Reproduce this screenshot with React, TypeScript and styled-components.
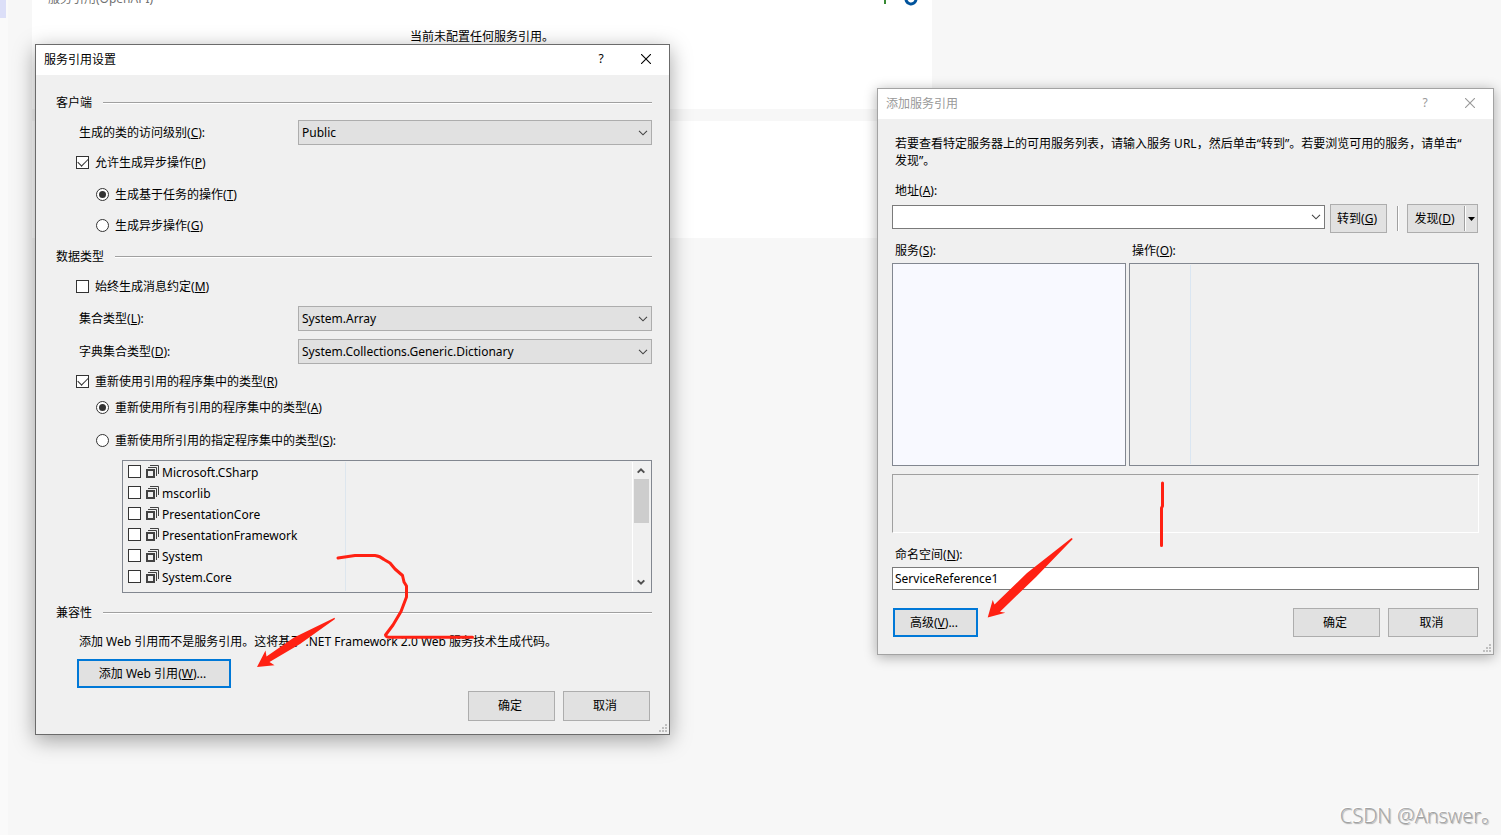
import React from "react";
import styled, { createGlobalStyle, css } from "styled-components";

const GlobalStyle = createGlobalStyle`
  * { box-sizing: border-box; }
  html, body { margin: 0; height: 100%; }
  body {
    background: #f7f7f7;
    color: #000;
    font: 12px/20px "Noto Sans", "Noto Sans CJK SC", sans-serif;
    overflow: hidden;
  }
  button, input, select { font: inherit; color: inherit; margin: 0; }
`;

const Desktop = styled.main`
  position: relative;
  display: flex;
  gap: 24px;
  min-height: 100vh;
  overflow: hidden;
`;

const Rail = styled.aside`
  width: 8px;
  background: #fafafa;
`;

const RailMark = styled.div`
  width: 6px;
  height: 18px;
  background: #dcdff8;
`;

const Cards = styled.div`
  flex: 0 1 900px;
  display: flex;
  flex-direction: column;
  gap: 12px;
`;

const Card = styled.section<{ $height: number }>`
  height: ${(p) => p.$height}px;
  background: #fff;
`;

const CardHead = styled.header`
  display: flex;
  justify-content: space-between;
  align-items: center;
  height: 20px;
  margin-top: -11px;
  padding: 0 14px 0 16px;
  color: #717171;
`;

const CardIcons = styled.span`
  display: flex;
  gap: 12px;
`;

const EmptyNote = styled.p`
  margin: 18px 0 0;
  text-align: center;
`;

const Dialog = styled.section<{ $inactive?: boolean; $x: number; $y: number; $width: number }>`
  position: absolute;
  left: ${(p) => p.$x}px;
  top: ${(p) => p.$y}px;
  width: ${(p) => p.$width}px;
  background: #f0f0f0;
  border: 1px solid ${(p) => (p.$inactive ? "#a3a3a3" : "#6b6b6b")};
  box-shadow: ${(p) =>
    p.$inactive ? "0 2px 12px rgba(0,0,0,.32)" : "0 5px 20px rgba(0,0,0,.36)"};
`;

const TitleBar = styled.header<{ $inactive?: boolean }>`
  display: flex;
  align-items: center;
  height: 30px;
  padding-left: 8px;
  background: #fff;
  color: ${(p) => (p.$inactive ? "#999" : "#000")};
`;

const Title = styled.h1`
  flex: 1;
  margin: 0;
  font-size: 12px;
  font-weight: 400;
`;

const TitleButton = styled.button`
  display: flex;
  align-items: center;
  justify-content: center;
  width: 45px;
  height: 30px;
  padding: 0 1px 2px 0;
  border: 0;
  background: none;
`;

const SettingsBody = styled.form`
  display: flex;
  flex-direction: column;
  padding: 18px 17px 13px 20px;
`;

const ServiceBody = styled.form`
  display: flex;
  flex-direction: column;
  padding: 16px 14px 17px;
`;

const GroupTitle = styled.h2<{ $gap?: number }>`
  display: flex;
  align-items: center;
  gap: 11px;
  height: 20px;
  margin: ${(p) => p.$gap ?? 0}px 0 0;
  font-size: 12px;
  font-weight: 400;
  line-height: 22px;
  &::after {
    content: "";
    flex: 1;
    height: 2px;
    background: linear-gradient(#a0a0a0 50%, #fff 50%);
  }
`;

const Caption = styled.span`
  padding-top: 2px;
`;

const Field = styled.div<{ $gap: number }>`
  display: grid;
  grid-template-columns: 219px 1fr;
  align-items: center;
  margin-top: ${(p) => p.$gap}px;
  padding-left: 23px;
`;

const SelectBox = styled.div`
  position: relative;
  display: grid;
`;

const Select = styled.select`
  appearance: none;
  width: 100%;
  height: 25px;
  padding: 0 20px 0 3px;
  border: 1px solid #adadad;
  border-radius: 0;
  background: #e1e1e1;
`;

const SelectArrow = styled.span`
  position: absolute;
  right: 4px;
  top: 0;
  height: 100%;
  display: flex;
  align-items: center;
  pointer-events: none;
`;

const Choice = styled.label<{ $gap: number; $nested?: boolean }>`
  display: flex;
  align-items: center;
  gap: 6px;
  height: 20px;
  margin-top: ${(p) => p.$gap}px;
  padding-left: ${(p) => (p.$nested ? 40 : 20)}px;
`;

const mark = css`
  appearance: none;
  flex: none;
  display: grid;
  place-items: center;
  width: 13px;
  height: 13px;
  border: 1px solid #333;
  background: #fff;
`;

const Check = styled.input.attrs({ type: "checkbox" })`
  ${mark}
  &:checked::after {
    content: "";
    width: 9px;
    height: 5px;
    margin-top: -3px;
    border: solid #333;
    border-width: 0 0 1px 1px;
    transform: rotate(-45deg);
  }
`;

const Radio = styled.input.attrs({ type: "radio" })`
  ${mark}
  border-radius: 50%;
  &:checked::after {
    content: "";
    width: 7px;
    height: 7px;
    border-radius: 50%;
    background: #333;
  }
`;

const AssemblyBox = styled.div`
  display: flex;
  height: 133px;
  margin: 10px 0 0 66px;
  padding: 1px 2px 1px 5px;
  border: 1px solid #828790;
`;

const AssemblyList = styled.ul`
  width: 218px;
  margin: 0;
  padding: 0;
  list-style: none;
  border-right: 1px solid #dde6ee;
`;

const AssemblyItem = styled.li`
  height: 21px;
`;

const AssemblyLabel = styled.label`
  display: flex;
  align-items: center;
  gap: 3px;
  height: 19px;
  svg { margin-left: 2px; }
`;

const ScrollBar = styled.div`
  display: flex;
  flex-direction: column;
  align-items: center;
  width: 17px;
  margin-left: auto;
  border-left: 1px solid #fff;
`;

const ScrollButton = styled.button`
  display: grid;
  place-items: center;
  width: 15px;
  height: 17px;
  padding: 0;
  border: 0;
  background: none;
`;

const ScrollThumb = styled.div`
  width: 15px;
  height: 44px;
  margin-bottom: auto;
  background: #cdcdcd;
`;

const Note = styled.p`
  margin: 9px 0 7px;
  padding-left: 23px;
  white-space: nowrap;
`;

const Actions = styled.div<{ $gap: number; $inset: number }>`
  display: flex;
  justify-content: flex-end;
  gap: 8px;
  margin-top: ${(p) => p.$gap}px;
  padding: 0 ${(p) => p.$inset}px;
`;

const Button = styled.button<{ $width?: number; $tall?: boolean; $focused?: boolean }>`
  flex: none;
  width: ${(p) => p.$width ?? 87}px;
  height: ${(p) => (p.$tall ? 30 : 29)}px;
  padding: 0 3px 0 0;
  border: ${(p) => (p.$focused ? "2px solid #0078d7" : "1px solid #adadad")};
  background: #e1e1e1;
`;

const WebButton = styled(Button)`
  margin-left: 21px;
`;

const AdvancedButton = styled(Button)`
  margin-right: auto;
`;

const Intro = styled.p`
  margin: 0;
  padding-left: 3px;
  line-height: 17px;
  white-space: nowrap;
`;

const Label = styled.label<{ $gap?: number }>`
  display: block;
  height: 20px;
  margin-top: ${(p) => p.$gap ?? 0}px;
  padding-left: 3px;
`;

const AddressRow = styled.div`
  display: flex;
  align-items: center;
  gap: 5px;
  margin-top: 3px;
  padding-right: 1px;
`;

const Combo = styled.div`
  flex: 1;
  display: flex;
  height: 24px;
  margin-bottom: 3px;
  border: 1px solid #7a7a7a;
  background: #fff;
`;

const ComboInput = styled.input`
  flex: 1;
  min-width: 0;
  padding: 0 2px;
  border: 0;
  background: none;
`;

const ComboButton = styled.button`
  display: grid;
  place-items: center;
  width: 17px;
  padding: 0;
  border: 0;
  background: none;
`;

const Divider = styled.span`
  width: 2px;
  height: 25px;
  margin: 0 3px 0 5px;
  background: linear-gradient(90deg, #a0a0a0 50%, #fff 50%);
`;

const SplitButton = styled.div`
  display: flex;
  align-items: center;
  width: 71px;
  height: 29px;
  border: 1px solid #adadad;
  background: #e1e1e1;
`;

const SplitMain = styled.button`
  flex: 1;
  padding: 0 3px 0 0;
  border: 0;
  background: none;
`;

const SplitDrop = styled.button`
  display: grid;
  place-items: center;
  width: 13px;
  height: 25px;
  padding: 0;
  border: 0;
  border-left: 1px solid #a0a0a0;
  background: none;
  box-shadow: inset 1px 0 #fff;
`;

const Panes = styled.div`
  display: grid;
  grid-template-columns: 234px 1fr;
  gap: 3px;
  margin-top: 8px;
`;

const PaneTitle = styled.h2`
  height: 22px;
  margin: 0;
  padding-left: 3px;
  font-size: 12px;
  font-weight: 400;
`;

const Pane = styled.div<{ $tree?: boolean }>`
  height: 203px;
  padding: 1px;
  border: 1px solid #828790;
  background: ${(p) => (p.$tree ? "#f8f9ff" : "#f0f0f0")};
`;

const PaneColumn = styled.div`
  width: 60px;
  height: 100%;
  border-right: 1px solid #dae6f2;
`;

const Status = styled.div`
  height: 59px;
  margin-top: 8px;
  border: 1px solid;
  border-color: #a0a0a0 #fff #fff #a0a0a0;
`;

const TextBox = styled.input`
  height: 23px;
  margin-top: 2px;
  padding: 0 2px;
  border: 1px solid #7a7a7a;
  background: #fff;
`;

const Grip = styled.svg`
  position: absolute;
  right: 2px;
  bottom: 2px;
`;

const Ink = styled.svg`
  position: absolute;
  left: -1px;
  top: -1px;
  pointer-events: none;
  overflow: visible;
`;

const Watermark = styled.div`
  position: absolute;
  right: 0;
  bottom: 6px;
  font: 300 20px/26px "Open Sans", "Noto Sans CJK SC", sans-serif;
  color: #a2a2a2;
  text-shadow: -1px -1px #fff, 1px 1px 1px #aaa;
`;

const Chevron = () => (
  <svg width="10" height="6" viewBox="0 0 10 6" fill="none" stroke="#444" strokeWidth="1.1" aria-hidden="true">
    <path d="M1 .8 5 4.8 9 .8" />
  </svg>
);

const CloseIcon = () => (
  <svg width="10" height="10" viewBox="0 0 10 10" fill="none" stroke="currentColor" strokeWidth="1.1" aria-hidden="true">
    <path d="M0 0l10 10M10 0L0 10" />
  </svg>
);

const ScrollArrow = ({ down }: { down?: boolean }) => (
  <svg width="8" height="7" viewBox="0 0 8 7" fill="none" stroke="#505050" strokeWidth="2" aria-hidden="true">
    <path d={down ? "M.7 1.4 4 4.7 7.3 1.4" : "M.7 5.6 4 2.3 7.3 5.6"} />
  </svg>
);

const AssemblyIcon = () => (
  <svg width="13" height="13" viewBox="0 0 13 13" fill="none" stroke="#424242" aria-hidden="true">
    <path d="M1 5h7v7H1z" strokeWidth="2" />
    <path d="M2 2.5h8.5V11M4 .5h8.5V9" />
  </svg>
);

const ResizeGrip = () => (
  <Grip width="8" height="8" viewBox="0 0 8 8" fill="#bfbfbf" aria-hidden="true">
    <path d="M6 0h2v2H6zM3 3h2v2H3zM6 3h2v2H6zM0 6h2v2H0zM3 6h2v2H3zM6 6h2v2H6z" />
  </Grip>
);

const Key = ({ k }: { k: string }) => (
  <>
    (<u>{k}</u>)
  </>
);

const assemblies = [
  "Microsoft.CSharp",
  "mscorlib",
  "PresentationCore",
  "PresentationFramework",
  "System",
  "System.Core",
];

function SelectField({ id, label, k, value, gap }: { id: string; label: string; k: string; value: string; gap: number }) {
  return (
    <Field $gap={gap}>
      <label htmlFor={id}>
        {label}
        <Key k={k} />:
      </label>
      <SelectBox>
        <Select id={id} defaultValue={value}>
          <option>{value}</option>
        </Select>
        <SelectArrow>
          <Chevron />
        </SelectArrow>
      </SelectBox>
    </Field>
  );
}

function DialogTitle({ text, inactive }: { text: string; inactive?: boolean }) {
  return (
    <TitleBar $inactive={inactive}>
      <Title>{text}</Title>
      <TitleButton type="button" aria-label="帮助">?</TitleButton>
      <TitleButton type="button" aria-label="关闭">
        <CloseIcon />
      </TitleButton>
    </TitleBar>
  );
}

function SettingsDialog() {
  return (
    <Dialog $x={35} $y={44} $width={635}>
      <DialogTitle text="服务引用设置" />
      <SettingsBody>
        <GroupTitle>客户端</GroupTitle>
        <SelectField id="access" label="生成的类的访问级别" k="C" value="Public" gap={7} />
        <Choice $gap={7}>
          <Check defaultChecked />
          <Caption>允许生成异步操作<Key k="P" /></Caption>
        </Choice>
        <Choice $gap={12} $nested>
          <Radio name="async" defaultChecked />
          <Caption>生成基于任务的操作<Key k="T" /></Caption>
        </Choice>
        <Choice $gap={11} $nested>
          <Radio name="async" />
          <Caption>生成异步操作<Key k="G" /></Caption>
        </Choice>
        <GroupTitle $gap={12}>数据类型</GroupTitle>
        <Choice $gap={9}>
          <Check />
          <Caption>始终生成消息约定<Key k="M" /></Caption>
        </Choice>
        <SelectField id="collection" label="集合类型" k="L" value="System.Array" gap={10} />
        <SelectField id="dictionary" label="字典集合类型" k="D" value="System.Collections.Generic.Dictionary" gap={8} />
        <Choice $gap={7}>
          <Check defaultChecked />
          <Caption>重新使用引用的程序集中的类型<Key k="R" /></Caption>
        </Choice>
        <Choice $gap={6} $nested>
          <Radio name="reuse" defaultChecked />
          <Caption>重新使用所有引用的程序集中的类型<Key k="A" /></Caption>
        </Choice>
        <Choice $gap={13} $nested>
          <Radio name="reuse" />
          <Caption>重新使用所引用的指定程序集中的类型<Key k="S" />:</Caption>
        </Choice>
        <AssemblyBox>
          <AssemblyList>
            {assemblies.map((name) => (
              <AssemblyItem key={name}>
                <AssemblyLabel>
                  <Check />
                  <AssemblyIcon />
                  <Caption>{name}</Caption>
                </AssemblyLabel>
              </AssemblyItem>
            ))}
          </AssemblyList>
          <ScrollBar>
            <ScrollButton type="button" aria-label="向上滚动">
              <ScrollArrow />
            </ScrollButton>
            <ScrollThumb />
            <ScrollButton type="button" aria-label="向下滚动">
              <ScrollArrow down />
            </ScrollButton>
          </ScrollBar>
        </AssemblyBox>
        <GroupTitle $gap={10}>兼容性</GroupTitle>
        <Note>添加 Web 引用而不是服务引用。这将基于 .NET Framework 2.0 Web 服务技术生成代码。</Note>
        <WebButton type="button" $width={154} $focused>
          添加 Web 引用<Key k="W" />...
        </WebButton>
        <Actions $gap={3} $inset={2}>
          <Button type="button" $tall>确定</Button>
          <Button type="button" $tall>取消</Button>
        </Actions>
      </SettingsBody>
      <ResizeGrip />
      <Ink width="635" height="691" viewBox="35 44 635 691" aria-hidden="true">
        <path
          d="M338 558 355 555.5H375Q380 556 384 559.5L390 563 395 569 402.5 575.5 404 582 406.5 586V597L401 611.5 393 625 385.5 635Q386 637.3 389 637.3H472.5"
          fill="none"
          stroke="#ff2113"
          strokeWidth="3"
          strokeLinecap="round"
          strokeLinejoin="round"
        />
        <path d="M257 667 265.5 650.5 266.5 656.5 294 637.5 334.5 617.8 335 619 300 644 269.5 662 274.5 665.3Z" fill="#ff2113" />
      </Ink>
    </Dialog>
  );
}

function ServiceDialog() {
  return (
    <Dialog $inactive $x={877} $y={88} $width={617}>
      <DialogTitle text="添加服务引用" inactive />
      <ServiceBody>
        <Intro>
          若要查看特定服务器上的可用服务列表，请输入服务 URL，然后单击“转到”。若要浏览可用的服务，请单击“
          <br />
          发现”。
        </Intro>
        <Label htmlFor="address" $gap={12}>地址<Key k="A" />:</Label>
        <AddressRow>
          <Combo>
            <ComboInput id="address" />
            <ComboButton type="button" aria-label="历史地址">
              <Chevron />
            </ComboButton>
          </Combo>
          <Button type="button" $width={57}>转到<Key k="G" /></Button>
          <Divider />
          <SplitButton>
            <SplitMain type="button">发现<Key k="D" /></SplitMain>
            <SplitDrop type="button" aria-label="发现选项">
              <svg width="7" height="4" viewBox="0 0 7 4" aria-hidden="true">
                <path d="M0 0h7L3.5 4z" />
              </svg>
            </SplitDrop>
          </SplitButton>
        </AddressRow>
        <Panes>
          <section>
            <PaneTitle>服务<Key k="S" />:</PaneTitle>
            <Pane $tree />
          </section>
          <section>
            <PaneTitle>操作<Key k="O" />:</PaneTitle>
            <Pane>
              <PaneColumn />
            </Pane>
          </section>
        </Panes>
        <Status />
        <Label htmlFor="namespace" $gap={12}>命名空间<Key k="N" />:</Label>
        <TextBox id="namespace" defaultValue="ServiceReference1" />
        <Actions $gap={18} $inset={1}>
          <AdvancedButton type="button" $width={85} $focused>高级<Key k="V" />...</AdvancedButton>
          <Button type="button">确定</Button>
          <Button type="button" $width={90}>取消</Button>
        </Actions>
      </ServiceBody>
      <ResizeGrip />
      <Ink width="617" height="567" viewBox="877 88 617 567" aria-hidden="true">
        <path d="M1162.5 483V506L1161.5 508V545.5" fill="none" stroke="#ff2113" strokeWidth="3" strokeLinecap="round" />
        <path d="M987.7 617.5 992.7 600 994.5 604.5 1027 573 1071.5 538 1072.8 539 1036 577 1000 611.7 1005.3 612.8Z" fill="#ff2113" />
      </Ink>
    </Dialog>
  );
}

export default function App() {
  return (
    <>
      <GlobalStyle />
      <Desktop>
        <Rail>
          <RailMark />
        </Rail>
        <Cards>
          <Card $height={109}>
            <CardHead>
              <span>服务引用(OpenAPI)</span>
              <CardIcons>
                <svg width="14" height="14" viewBox="0 0 14 14" fill="none" stroke="#388a34" strokeWidth="2" aria-hidden="true">
                  <path d="M7 0v12M1 6h12" />
                </svg>
                <svg width="14" height="14" viewBox="0 0 14 14" fill="none" stroke="#00539c" strokeWidth="3" aria-hidden="true">
                  <path d="M12 7a5 5 0 1 1-2-4M11 0v4H7" />
                </svg>
              </CardIcons>
            </CardHead>
            <EmptyNote>当前未配置任何服务引用。</EmptyNote>
          </Card>
          <Card $height={117} />
        </Cards>
        <SettingsDialog />
        <ServiceDialog />
        <Watermark>CSDN @Answer。</Watermark>
      </Desktop>
    </>
  );
}
